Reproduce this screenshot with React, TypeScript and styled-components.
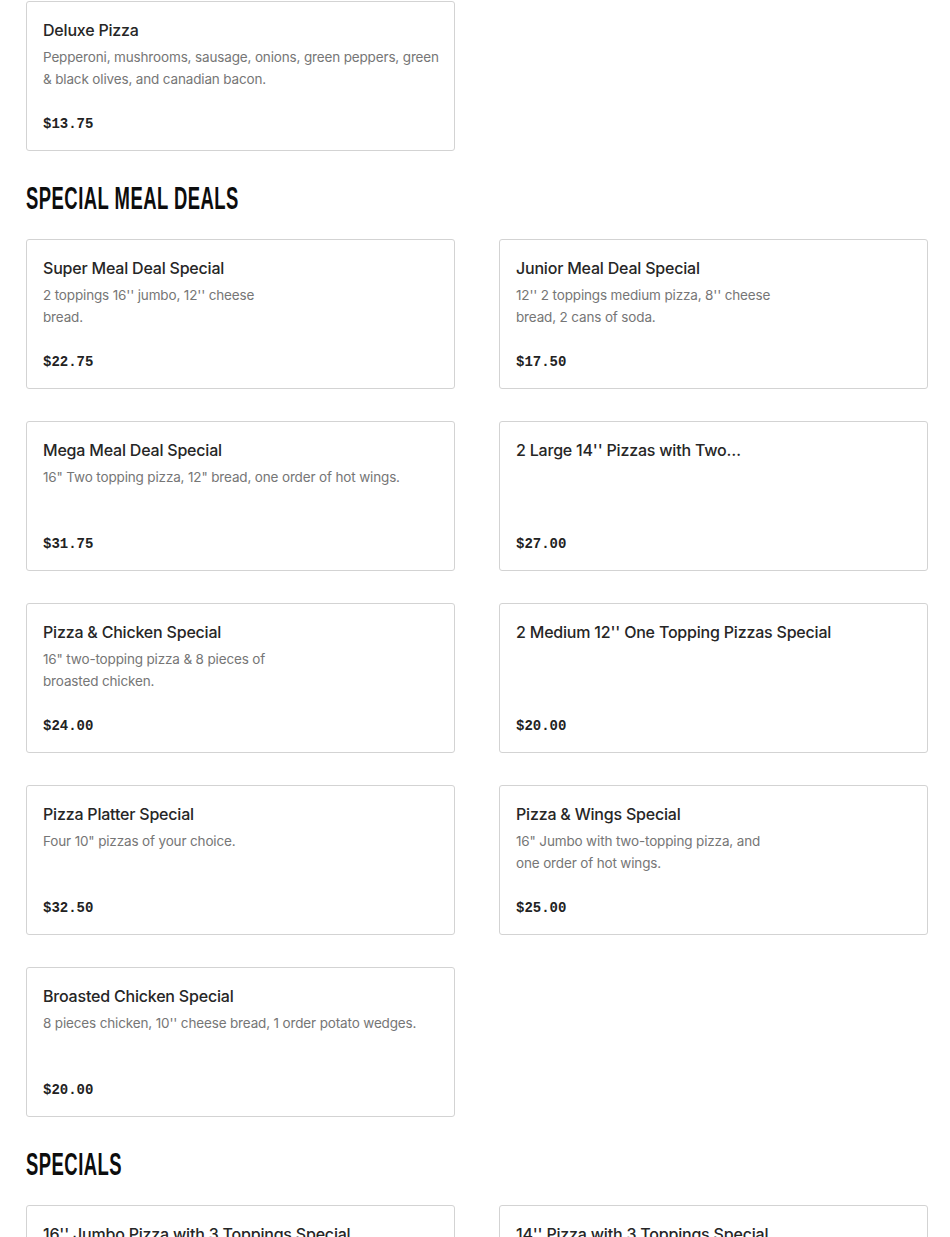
import React from "react";
import styled, { createGlobalStyle } from "styled-components";

const Global = createGlobalStyle`
  html, body { margin: 0; padding: 0; background: #fff; }
  body { font-family: Inter, "Noto Sans", sans-serif; -webkit-font-smoothing: antialiased; }
`;

const Page = styled.div`
  padding: 1px 22px 40px 26px;
`;

const Section = styled.section`
  display: flex;
  flex-direction: column;
`;

const Heading = styled.h2`
  margin: 30px 0 22px;
  height: 36px;
  display: flex;
  align-items: center;
`;

const HeadingText = styled.span`
  display: inline-block;
  font-family: "Liberation Sans", Arial, sans-serif;
  font-weight: 700;
  font-size: 31px;
  line-height: 36px;
  letter-spacing: 0.8px;
  color: #0d0d0d;
  text-transform: uppercase;
  transform: scaleX(0.595);
  transform-origin: left center;
  white-space: nowrap;
`;

const Grid = styled.div`
  display: grid;
  grid-template-columns: 429px 429px;
  column-gap: 44px;
  row-gap: 32px;
`;

const Card = styled.div`
  box-sizing: border-box;
  height: 150px;
  border: 1px solid #d3d3d3;
  border-radius: 3px;
  padding: 16px 8px 16px 16px;
  display: flex;
  flex-direction: column;
  background: #fff;
`;

const Title = styled.div`
  font-size: 16px;
  line-height: 24px;
  font-weight: 500;
  letter-spacing: -0.2px;
  color: #262626;
  white-space: nowrap;
  overflow: hidden;
  text-overflow: ellipsis;
`;

const Desc = styled.div`
  margin-top: 4px;
  font-size: 13.5px;
  line-height: 22px;
  letter-spacing: -0.15px;
  color: #767676;
  white-space: nowrap;
`;

const Price = styled.div`
  margin-top: auto;
  font-family: "Liberation Mono", "DejaVu Sans Mono", monospace;
  font-weight: 700;
  font-size: 14px;
  line-height: 20px;
  color: #222;
`;

type Item = { title: string; desc: string[]; price: string };

const MenuCard = ({ item }: { item: Item }) => (
  <Card>
    <Title>{item.title}</Title>
    <Desc>
      {item.desc.map((l, i) => (
        <React.Fragment key={i}>
          {i > 0 && <br />}
          {l}
        </React.Fragment>
      ))}
    </Desc>
    <Price>{item.price}</Price>
  </Card>
);

const top: Item[] = [
  {
    title: "Deluxe Pizza",
    desc: [
      "Pepperoni, mushrooms, sausage, onions, green peppers, green",
      "& black olives, and canadian bacon.",
    ],
    price: "$13.75",
  },
];

const mealDeals: Item[] = [
  { title: "Super Meal Deal Special", desc: ["2 toppings 16'' jumbo, 12'' cheese", "bread."], price: "$22.75" },
  { title: "Junior Meal Deal Special", desc: ["12'' 2 toppings medium pizza, 8'' cheese", "bread, 2 cans of soda."], price: "$17.50" },
  { title: "Mega Meal Deal Special", desc: ["16\" Two topping pizza, 12\" bread, one order of hot wings."], price: "$31.75" },
  { title: "2 Large 14'' Pizzas with Two…", desc: [], price: "$27.00" },
  { title: "Pizza & Chicken Special", desc: ["16\" two-topping pizza & 8 pieces of", "broasted chicken."], price: "$24.00" },
  { title: "2 Medium 12'' One Topping Pizzas Special", desc: [], price: "$20.00" },
  { title: "Pizza Platter Special", desc: ["Four 10\" pizzas of your choice."], price: "$32.50" },
  { title: "Pizza & Wings Special", desc: ["16\" Jumbo with two-topping pizza, and", "one order of hot wings."], price: "$25.00" },
  { title: "Broasted Chicken Special", desc: ["8 pieces chicken, 10'' cheese bread, 1 order potato wedges."], price: "$20.00" },
];

const specials: Item[] = [
  { title: "16'' Jumbo Pizza with 3 Toppings Special", desc: [], price: "$18.00" },
  { title: "14'' Pizza with 3 Toppings Special", desc: [], price: "$15.00" },
];

export default function App() {
  return (
    <>
      <Global />
      <Page>
        <Grid>
          {top.map((it) => (
            <MenuCard key={it.title} item={it} />
          ))}
        </Grid>
        <Section>
          <Heading>
            <HeadingText>Special Meal Deals</HeadingText>
          </Heading>
          <Grid>
            {mealDeals.map((it) => (
              <MenuCard key={it.title} item={it} />
            ))}
          </Grid>
        </Section>
        <Section>
          <Heading>
            <HeadingText>Specials</HeadingText>
          </Heading>
          <Grid>
            {specials.map((it) => (
              <MenuCard key={it.title} item={it} />
            ))}
          </Grid>
        </Section>
      </Page>
    </>
  );
}
